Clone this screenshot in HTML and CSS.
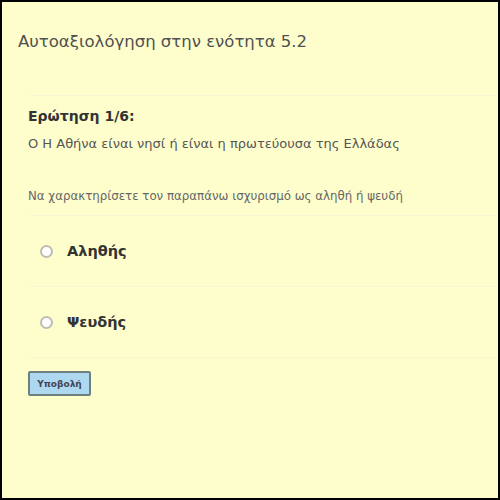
FILE: index.html
```html
<!DOCTYPE html>
<html lang="el">
<head>
<meta charset="utf-8">
<title>Αυτοαξιολόγηση</title>
<link rel="stylesheet" href="styles.css">
</head>
<body>
<div class="frame">
  <h1 class="title">Αυτοαξιολόγηση στην ενότητα 5.2</h1>
  <div class="rule"></div>
  <div class="question">
    <div class="qnum">Ερώτηση 1/6:</div>
    <div class="qtext">Ο Η Αθήνα είναι νησί ή είναι η πρωτεύουσα της Ελλάδας</div>
    <div class="instr">Να χαρακτηρίσετε τον παραπάνω ισχυρισμό ως αληθή ή ψευδή</div>
  </div>
  <div class="rule"></div>
  <label class="option"><span class="radio"></span><span class="optlabel">Αληθής</span></label>
  <div class="rule"></div>
  <label class="option"><span class="radio"></span><span class="optlabel">Ψευδής</span></label>
  <div class="rule"></div>
  <div class="actions"><button class="submit" type="button">Υποβολή</button></div>
</div>
</body>
</html>
```
FILE: styles.css
```css
html, body {
  margin: 0;
  padding: 0;
  background: #fdfdcc;
}
.frame {
  box-sizing: border-box;
  width: 500px;
  height: 500px;
  border: 2px solid #000;
  background: #fefecd;
  font-family: "DejaVu Sans", Verdana, sans-serif;
  display: flex;
  flex-direction: column;
}
.title {
  margin: 0;
  padding: 30px 0 0 16px;
  height: 93px;
  box-sizing: border-box;
  font-size: 16.5px;
  line-height: 20px;
  font-weight: normal;
  color: #505050;
}
.rule {
  margin: 0 2px 0 28px;
  height: 1px;
  background: #f5f5d0;
}
.question {
  padding: 12px 0 0 26px;
  height: 119px;
  box-sizing: border-box;
}
.qnum {
  font-size: 14px;
  font-weight: bold;
  color: #333;
  line-height: 16px;
}
.qtext {
  font-size: 13px;
  color: #555;
  margin-top: 12px;
  line-height: 16px;
}
.instr {
  font-size: 11.8px;
  color: #666;
  margin-top: 37px;
  line-height: 14px;
}
.option {
  display: flex;
  align-items: center;
  height: 70px;
  padding-left: 38px;
  gap: 14px;
}
.radio {
  width: 9px;
  height: 9px;
  border: 2px solid #bdbdb4;
  border-radius: 50%;
  background: #fff;
}
.optlabel {
  font-size: 14.5px;
  font-weight: bold;
  color: #333;
}
.actions {
  padding: 13px 0 0 26px;
}
.submit {
  width: 63px;
  height: 25px;
  background: #aed8ef;
  border: 2px solid #6f7f7f;
  border-radius: 2px;
  font-family: "DejaVu Sans", Verdana, sans-serif;
  font-size: 9px;
  font-weight: bold;
  color: #445;
  padding: 0;
}
```
